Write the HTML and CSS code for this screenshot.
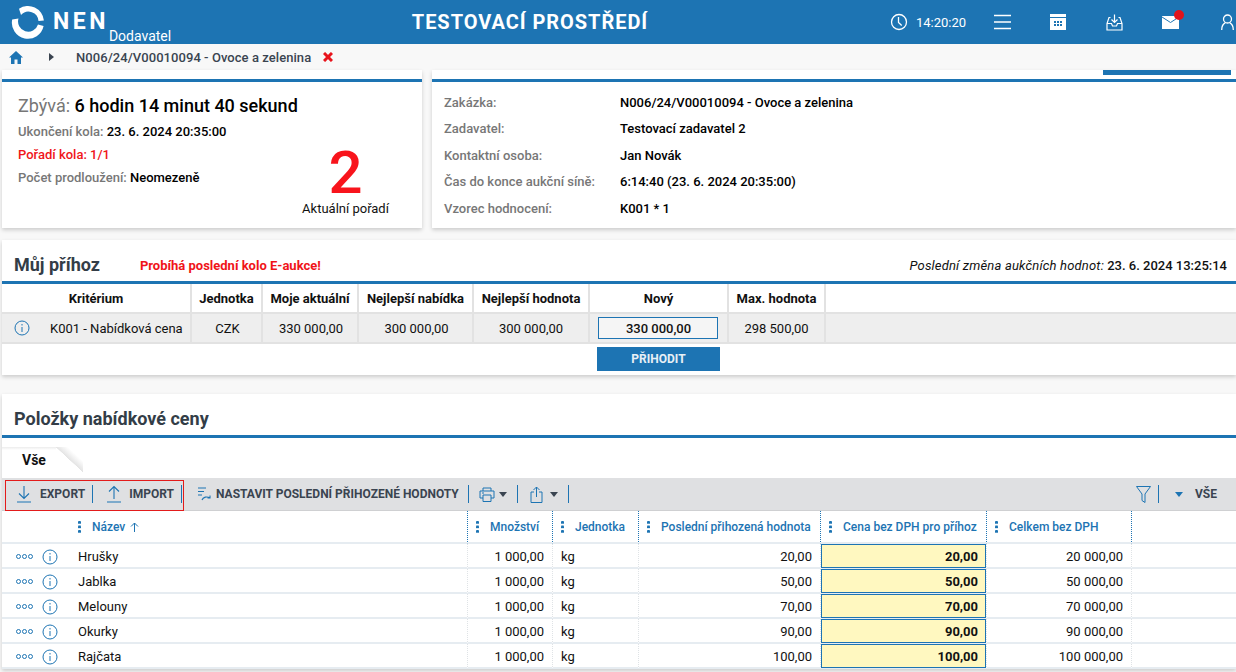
FILE: index.html
```html
<!DOCTYPE html>
<html lang="cs">
<head>
<meta charset="utf-8">
<title>NEN</title>
<link rel="stylesheet" href="styles.css">
</head>
<body>
<header class="topbar">
  <div class="brand">
    <svg class="logo" width="34" height="34" viewBox="0 0 34 34" fill="#fff"><path d="M1.200 14.500A16 16 0 0 0 32.600 21L27 19.500A10 10 0 0 1 7.500 13.500Z"/><path d="M8 3.800A16 16 0 0 1 32.900 15.500L27.500 16A10 10 0 0 0 10 10Z"/></svg>
    <span class="nen">NEN</span>
    <span class="role">Dodavatel</span>
  </div>
  <div class="env">TESTOVACÍ PROSTŘEDÍ</div>
  <div class="tools">
    <svg class="t-clock" width="18" height="18" viewBox="0 0 18 18" fill="none" stroke="#fff" stroke-width="1.300"><circle cx="9" cy="9" r="7.500"/><path d="M8.500 4v5.500l3.200 3"/></svg>
    <span class="clock">14:20:20</span>
    <svg class="t-menu" width="17" height="16" viewBox="0 0 17 16" stroke="#fff" stroke-width="1.600"><path d="M0 1.500h17M0 8h17M0 14.500h17"/></svg>
    <svg class="t-cal" width="16" height="16" viewBox="0 0 16 16"><path d="M0 0h16v3H0zM0 4h16v12H0z" fill="#fff"/><path d="M4 7h2v2H4zM7 7h2v2H7zM10 7h2v2h-2zM4 10h2v2H4zM7 10h2v2H7zM10 10h2v2h-2z" fill="#1d74b3"/></svg>
    <svg class="t-inbox" width="17" height="17" viewBox="0 0 17 17" fill="none" stroke="#fff" stroke-width="1.200"><path d="M4.500 3.500H3L1 9.500v6.500h15V9.500L14 3.500h-1.500"/><path d="M1 9.500h4.500l1 2.500h4l1-2.500H16"/><path d="M8.500.5V8M5.500 5.500l3 3 3-3"/></svg>
    <span class="mail">
      <svg width="17" height="13" viewBox="0 0 17 13"><path d="M0 0h17v13H0z" fill="#fff"/><path d="M0 1l8.500 5.500L17 1" fill="none" stroke="#1d74b3" stroke-width="1"/></svg>
      <span class="dot"></span>
    </span>
    <svg class="t-user" width="13" height="16" viewBox="0 0 13 16" fill="none" stroke="#fff" stroke-width="1.300"><circle cx="6.500" cy="5" r="4"/><path d="M.7 16c0-4 2-6.500 3.500-7.200M12.300 16c0-4-2-6.500-3.500-7.200"/></svg>
  </div>
</header>

<nav class="crumbs">
  <svg width="14" height="13" viewBox="0 0 14 13"><path d="M7 0 14 6.500h-2V13H8.500V8.500h-3V13H2V6.500H0z" fill="#1d74b3"/></svg>
  <svg class="crumb-arrow" width="5" height="8" viewBox="0 0 5 8"><path d="M0 0l5 4-5 4z" fill="#3a4450"/></svg>
  <span class="crumb-text">N006/24/V00010094 - Ovoce a zelenina</span>
  <svg class="crumb-x" width="10" height="10" viewBox="0 0 10 10"><path d="M1 1l8 8M9 1 1 9" stroke="#e8141c" stroke-width="3"/></svg>
</nav>

<main class="page">
  <div class="top-cards">
    <section class="card left-card">
      <div class="card-in">
        <div class="remain"><span class="remain-l">Zbývá:</span> 6 hodin 14 minut 40 sekund</div>
        <div class="info"><span class="lab">Ukončení kola:</span> <b>23. 6. 2024 20:35:00</b></div>
        <div class="info red">Pořadí kola: 1/1</div>
        <div class="info"><span class="lab">Počet prodloužení:</span> <b>Neomezeně</b></div>
        <div class="rank"><div class="rank-n">2</div><div class="rank-l">Aktuální pořadí</div></div>
      </div>
    </section>
    <section class="card right-card">
      <span class="tabmark"></span>
      <div class="card-in">
        <dl class="facts">
          <dt>Zakázka:</dt><dd>N006/24/V00010094 - Ovoce a zelenina</dd>
          <dt>Zadavatel:</dt><dd>Testovací zadavatel 2</dd>
          <dt>Kontaktní osoba:</dt><dd>Jan Novák</dd>
          <dt>Čas do konce aukční síně:</dt><dd>6:14:40 (23. 6. 2024 20:35:00)</dd>
          <dt>Vzorec hodnocení:</dt><dd>K001 * 1</dd>
        </dl>
      </div>
    </section>
  </div>

  <section class="panel bid">
    <div class="panel-head">
      <h2>Můj příhoz</h2>
      <span class="alert">Probíhá poslední kolo E-aukce!</span>
      <span class="changed"><i>Poslední změna aukčních hodnot:</i> <b>23. 6. 2024 13:25:14</b></span>
    </div>
    <div class="bid-table">
      <div class="bh c1">Kritérium</div><div class="bh c2">Jednotka</div><div class="bh c3">Moje aktuální</div><div class="bh c4">Nejlepší nabídka</div><div class="bh c5">Nejlepší hodnota</div><div class="bh c6">Nový</div><div class="bh c7">Max. hodnota</div><div class="bh c8"></div>
      <div class="bd c1 first"><svg class="info-i" width="16" height="16" viewBox="0 0 16 16"><use href="#i"/></svg><span>K001 - Nabídková cena</span></div><div class="bd c2">CZK</div><div class="bd c3">330 000,00</div><div class="bd c4">300 000,00</div><div class="bd c5">300 000,00</div><div class="bd c6"><span class="newval">330 000,00</span></div><div class="bd c7">298 500,00</div><div class="bd c8"></div>
    </div>
    <div class="bid-action"><button class="bid-btn">PŘIHODIT</button></div>
  </section>

  <section class="panel items">
    <div class="panel-head items-head"><h2>Položky nabídkové ceny</h2></div>
    <div class="tabs"><span class="tab">Vše</span></div>
    <div class="toolbar">
      <div class="boxed">
        <span class="tbtn"><svg width="16" height="18" viewBox="0 0 16 18" fill="none" stroke="#1d74b3" stroke-width="1.100"><path d="M8 1v12M3 8.500 8 13.500 13 8.500M1 17h14"/></svg>EXPORT</span><span class="sep"></span>
        <span class="tbtn imp"><svg width="16" height="18" viewBox="0 0 16 18" fill="none" stroke="#1d74b3" stroke-width="1.100"><path d="M8 14V2M3 6.500 8 1.500 13 6.500M1 17h14"/></svg>IMPORT</span><span class="sep"></span>
      </div>
      <span class="tbtn set"><svg width="15" height="14" viewBox="0 0 15 14" fill="none" stroke="#1d74b3" stroke-width="1.100"><path d="M1 1h8M1 4.500h6M1 8h4M5 13c1-3 5-4 8-2M13 8.500V11h-2.500"/></svg>NASTAVIT POSLEDNÍ PŘIHOZENÉ HODNOTY</span><span class="sep"></span>
      <span class="tbtn ico"><svg width="16" height="15" viewBox="0 0 16 15" fill="none" stroke="#1d74b3" stroke-width="1"><path d="M4 4V1h8v3M4 11H1V4h14v7h-3M4 8h8v6.500H4zM3 6h2"/></svg><i class="caret"></i></span><span class="sep"></span>
      <span class="tbtn ico"><svg class="share" width="13" height="17" viewBox="0 0 13 17" fill="none" stroke="#1d74b3" stroke-width="1"><path d="M4 6H1v10.500h11V6H9M6.500 11V1M3.500 4l3-3 3 3"/></svg><i class="caret"></i></span><span class="sep"></span>
      <span class="tool-right">
        <svg width="15" height="17" viewBox="0 0 15 17" fill="none" stroke="#1d74b3" stroke-width="1"><path d="M.5.500h14L9 8v8.500l-3-2V8z"/></svg>
        <span class="sep"></span>
        <i class="caret blue"></i><span class="all">VŠE</span>
      </span>
    </div>
    <div class="grid">
      <div class="gh g1"></div>
      <div class="gh g2 dotted"><i class="kebab"></i>Název <svg class="sort" width="9" height="10" viewBox="0 0 9 10" fill="none" stroke="#1d74b3"><path d="M4.500 10V1M1 4.500l3.500-3.500L8 4.500"/></svg></div>
      <div class="gh g3 dotted"><i class="kebab"></i>Množství</div>
      <div class="gh g4 dotted"><i class="kebab"></i>Jednotka</div>
      <div class="gh g5 dotted"><i class="kebab"></i>Poslední přihozená hodnota</div>
      <div class="gh g6 dotted"><i class="kebab"></i>Cena bez DPH pro příhoz</div>
      <div class="gh g7 dotted"><i class="kebab"></i>Celkem bez DPH</div>
      <div class="gh g8"></div>

      <div class="gd act"><i class="dots"><b></b><b></b><b></b></i><svg width="16" height="16" viewBox="0 0 16 16"><use href="#i"/></svg></div><div class="gd name">Hrušky</div><div class="gd num">1 000,00</div><div class="gd unit">kg</div><div class="gd num last">20,00</div><div class="gd cell"><span class="inp">20,00</span></div><div class="gd num tot">20 000,00</div><div class="gd end"></div>
      <div class="gd act"><i class="dots"><b></b><b></b><b></b></i><svg width="16" height="16" viewBox="0 0 16 16"><use href="#i"/></svg></div><div class="gd name">Jablka</div><div class="gd num">1 000,00</div><div class="gd unit">kg</div><div class="gd num last">50,00</div><div class="gd cell"><span class="inp">50,00</span></div><div class="gd num tot">50 000,00</div><div class="gd end"></div>
      <div class="gd act"><i class="dots"><b></b><b></b><b></b></i><svg width="16" height="16" viewBox="0 0 16 16"><use href="#i"/></svg></div><div class="gd name">Melouny</div><div class="gd num">1 000,00</div><div class="gd unit">kg</div><div class="gd num last">70,00</div><div class="gd cell"><span class="inp">70,00</span></div><div class="gd num tot">70 000,00</div><div class="gd end"></div>
      <div class="gd act"><i class="dots"><b></b><b></b><b></b></i><svg width="16" height="16" viewBox="0 0 16 16"><use href="#i"/></svg></div><div class="gd name">Okurky</div><div class="gd num">1 000,00</div><div class="gd unit">kg</div><div class="gd num last">90,00</div><div class="gd cell"><span class="inp">90,00</span></div><div class="gd num tot">90 000,00</div><div class="gd end"></div>
      <div class="gd act"><i class="dots"><b></b><b></b><b></b></i><svg width="16" height="16" viewBox="0 0 16 16"><use href="#i"/></svg></div><div class="gd name">Rajčata</div><div class="gd num">1 000,00</div><div class="gd unit">kg</div><div class="gd num last">100,00</div><div class="gd cell"><span class="inp">100,00</span></div><div class="gd num tot">100 000,00</div><div class="gd end"></div>
    </div>
  </section>
</main>

<svg class="defs" width="0" height="0"><defs><g id="i" fill="none" stroke="#1d74b3"><circle cx="8" cy="8" r="7"/><path d="M8 7v5M8 4v1.500" stroke-width="1"/></g></defs></svg>
</body>
</html>
```
FILE: styles.css
```css
* { box-sizing: border-box; }
html, body { margin: 0; padding: 0; height: 672px; overflow: hidden; }
body { background: #f8f8f8; font-family: Roboto, "Liberation Sans", sans-serif; font-size: 13px; color: #111; }
.defs { position: absolute; }

.topbar { height: 44px; background: #1d74b3; display: flex; align-items: center; color: #fff; position: relative; }
.brand { display: flex; align-items: flex-start; width: 400px; padding-left: 11px; height: 44px; padding-top: 5px; }
.nen { font-size: 23px; font-weight: 700; letter-spacing: 3.500px; line-height: 34px; margin-left: 8px; }
.role { font-size: 14px; margin: 23px 0 0 0; line-height: 16px; }
.env { width: 260px; text-align: center; font-size: 20px; font-weight: 700; letter-spacing: .95px; white-space: nowrap; }
.tools { flex: 1; position: relative; display: flex; align-items: center; padding-left: 230px; height: 44px; }
.t-clock { margin-right: 8px; }
.clock { font-size: 13px; width: 78px; }
.t-cal { margin-left: 39px; }
.t-inbox { margin-left: 40px; }
.mail { position: relative; margin-left: 39px; display: flex; }
.dot { position: absolute; width: 10px; height: 10px; background: #e1141c; border-radius: 50%; top: -6px; left: 12px; }
.t-user { margin-left: 42px; }

.crumbs { height: 26px; display: flex; align-items: center; padding-left: 9px; }
.crumb-arrow { margin-left: 26px; }
.crumb-text { margin-left: 22px; font-size: 13px; font-weight: 500; color: #3a4450; letter-spacing: .06px; }
.crumb-x { margin-left: 12px; }

.page { display: flex; flex-direction: column; }
.top-cards { display: flex; gap: 10px; padding-left: 2px; height: 158px; }
.card { background: #fff; padding-top: 9px; box-shadow: 0 2px 4px rgba(0,0,0,.18); position: relative; }
.card-in { border-top: 3px solid #1d74b3; position: relative; height: 149px; }
.left-card { width: 420px; }
.left-card .card-in { padding: 13px 16px; }
.right-card { flex: 1; }
.right-card .card-in { padding: 7px 12px; }
.tabmark { position: absolute; left: 671px; top: 0; width: 128px; height: 5px; background: #1d74b3; }
.remain { font-size: 18px; font-weight: 500; color: #000; line-height: 22px; margin-bottom: 3px; }
.remain-l { color: #777; font-weight: 400; }
.info { line-height: 23px; color: #111; }
.info b { font-weight: 500; color: #000; }
.lab { color: #777; font-weight: 500; }
.red { color: #f01419; font-weight: 500; }
.rank { position: absolute; left: 300px; top: 67px; text-align: center; width: 87px; }
.rank-n { font-size: 60px; line-height: 48px; color: #f8141c; font-weight: 500; }
.rank-l { font-size: 13px; line-height: 16px; margin-top: 4px; white-space: nowrap; }
.facts { display: grid; grid-template-columns: 176px 1fr; grid-auto-rows: 26.500px; margin: 0; align-items: center; }
.facts dt { color: #777; font-weight: 500; }
.facts dd { margin: 0; font-weight: 500; color: #000; }

.panel { background: #fff; box-shadow: 0 2px 4px rgba(0,0,0,.18); margin-left: 2px; }
.bid { margin-top: 12px; height: 135px; }
.panel-head { height: 44px; border-bottom: 3px solid #1d74b3; display: flex; align-items: center; padding: 8px 9px 0 12px; }
h2 { font-size: 18px; font-weight: 700; color: #333d47; margin: 0; }
.alert { color: #f01419; font-weight: 700; font-size: 13px; margin: 2px 0 0 40px; }
.changed { margin: 2px 0 0 auto; color: #111; }
.changed i { letter-spacing: .18px; }
.changed b { font-weight: 500; }
.bid-table { display: grid; grid-template-columns: 190px 71px 96px 115px 116px 139px 97px 1fr; grid-template-rows: 30px 30px; }
.bh { font-weight: 700; display: flex; align-items: center; justify-content: center; border-right: 2px solid #e2e2e2; border-bottom: 2px solid #e2e2e2; }
.bh.c8 { border-right: 0; }
.bd { background: #eee; display: flex; align-items: center; justify-content: center; border-right: 2px solid #e2e2e2; border-bottom: 2px solid #e2e2e2; }
.bd.c8 { border-right: 0; }
.bd.c2, .bd.c3, .bd.c4 { padding-left: 2px; }
.first { justify-content: flex-start; padding-left: 12px; gap: 20px; white-space: nowrap; }
.newval { width: 120px; height: 22px; margin-left: -2px; padding-left: 2px; border: 1px solid #1d74b3; background: #f5f5f5; display: flex; align-items: center; justify-content: center; font-weight: 500; }
.bid-action { padding: 3px 0 0 595px; }
.bid-btn { width: 123px; height: 24px; background: #1d74b3; border: 0; color: #e8f0f6; font: 700 12px Roboto, "Liberation Sans", sans-serif; padding: 0; }

.items { margin-top: 19px; }
.items-head { height: 44px; padding-left: 12px; padding-top: 8px; }
.tabs { height: 40px; padding-top: 9px; background: #fff; }
.tab { display: block; position: relative; width: 54px; height: 25px; padding-left: 20px; font-size: 14px; font-weight: 700; line-height: 27px; background: linear-gradient(#ececec, #fff 3px); }
.tab::after { content: ""; position: absolute; left: 54px; top: 0; width: 27px; height: 25px; background: linear-gradient(to top right, #fff 49%, #e4e4e4 50%, #fff 72%); }
.toolbar { height: 33px; background: #dfe0e2; border-bottom: 1px solid #cfd0d2; display: flex; align-items: center; padding-left: 3px; font-size: 12px; font-weight: 700; color: #3a4450; }
.boxed { height: 31px; margin-top: 2px; border: 1px solid #e31b1b; display: flex; align-items: center; width: 179px; padding-left: 10px; flex: none; }
.boxed .tbtn { margin-top: -2px; }
.boxed .sep { margin-left: 7px; margin-top: -2px; }
.tbtn { display: flex; align-items: center; gap: 8px; white-space: nowrap; }
.imp { margin-left: 13px; gap: 7px; }
.set { margin-left: 13px; gap: 4px; }
.sep { width: 1px; height: 18px; background: #1d74b3; margin-left: 9px; flex: none; }
.ico { margin-left: 10px; gap: 4px; }
.ico + .sep { margin-left: 10px; }
.ico .share { margin-left: 2px; margin-right: 3px; }
.caret { display: inline-block; width: 0; height: 0; border-left: 4.500px solid transparent; border-right: 4.500px solid transparent; border-top: 5px solid #3a4450; }
.caret.blue { border-top-color: #1d74b3; margin-left: 16px; }
.tool-right { margin-left: auto; display: flex; align-items: center; padding-right: 19px; }
.tool-right .sep { margin-left: 7px; }
.all { margin-left: 12px; }

.grid { display: grid; grid-template-columns: 64px 402px 85px 86px 182px 166px 145px 1fr; grid-template-rows: 33px repeat(5, 25px); }
.gh { color: #1d74b3; font-weight: 500; font-size: 12px; display: flex; align-items: center; border-bottom: 2px solid #e6ecf1; padding-left: 8px; }
.dotted { border-right: 1px dotted #1d74b3; white-space: nowrap; }
.g2 { padding-left: 12px; }
.kebab { width: 3px; height: 12px; margin-right: 11px; flex: none; background: radial-gradient(circle at 1.500px 1.500px, #1d74b3 1.400px, transparent 1.600px) 0 0 / 3px 4.500px; }
.sort { margin-left: 5px; }
.gd { display: flex; align-items: center; padding-top: 2px; border-bottom: 2px solid #e6ecf1; border-right: 1px dotted #dfe3e6; white-space: nowrap; }
.act { padding-left: 14px; gap: 9px; border-right: 0; }
.dots { display: flex; gap: 1px; }
.dots b { width: 5px; height: 5px; border: 1px solid #1d74b3; border-radius: 50%; }
.name { padding-left: 12px; }
.num { justify-content: flex-end; padding-right: 8px; }
.unit { padding-left: 8px; }
.cell { padding-top: 0; }
.inp { display: flex; width: 100%; height: 24px; align-items: center; justify-content: flex-end; padding: 2px 7px 0 0; border: 1px solid #1d74b3; background: #fff8c0; font-weight: 700; }
.end { border-right: 0; }
```
